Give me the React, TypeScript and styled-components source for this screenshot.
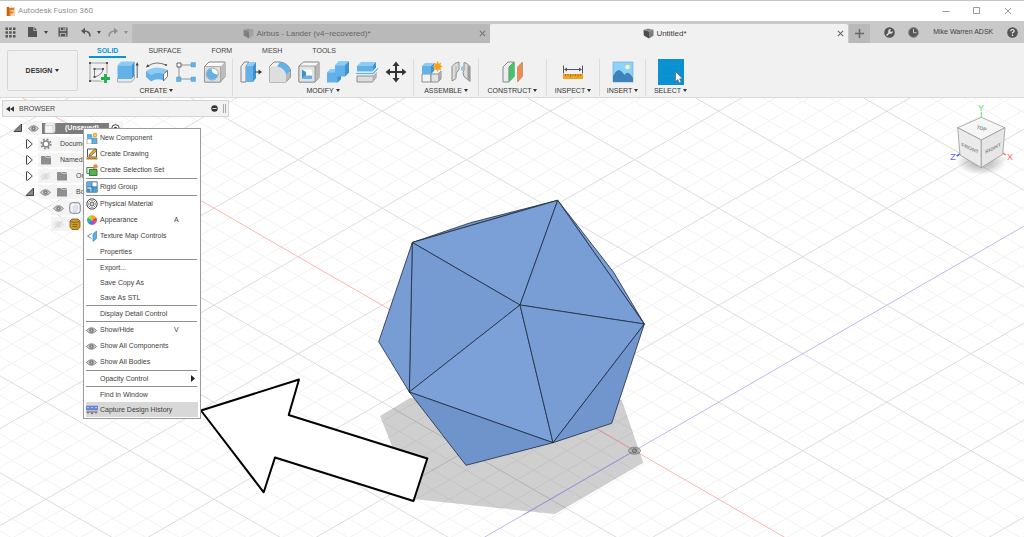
import React from 'react';
import styled, { createGlobalStyle } from 'styled-components';

const GlobalStyle = createGlobalStyle`
  * { box-sizing: border-box; }
  body {
    margin: 0;
    background: #fff;
    color: #444;
    font-family: "Liberation Sans", Arial, sans-serif;
    font-size: 7px;
    line-height: 10px;
  }
  button {
    margin: 0;
    padding: 0;
    border: 0;
    background: none;
    color: inherit;
    font: inherit;
    cursor: default;
  }
  ul { margin: 0; padding: 0; list-style: none; }
  svg { display: block; flex: none; }
`;

const Window = styled.div`
  display: flex;
  flex-direction: column;
  min-height: 100vh;
`;

/* ---------- title bar ---------- */

const TitleBar = styled.header`
  display: flex;
  align-items: center;
  gap: 3px;
  height: 21px;
  padding: 0 2px 0 6px;
  border-top: 1px solid #c4c4c4;
`;

const AppTitle = styled.h1`
  flex: 1;
  margin: 0;
  color: #909090;
  font: 400 8px/12px Roboto, "Liberation Sans", sans-serif;
`;

const WindowButton = styled.button`
  display: flex;
  align-items: center;
  justify-content: center;
  width: 28px;
  height: 20px;
`;

/* ---------- document tab strip ---------- */

const Strip = styled.div`
  display: flex;
  align-items: stretch;
  height: 22px;
  padding-top: 3px;
  background: #c9c9c9;
`;

const QuickTools = styled.div`
  display: flex;
  align-items: center;
  width: 132px;
  padding: 0 0 3px 5px;
`;

const QuickButton = styled.button<{ $w: number }>`
  display: flex;
  align-items: center;
  width: ${p => p.$w}px;
  height: 16px;
  gap: 6px;
`;

const DocTab = styled.div<{ $active?: boolean }>`
  display: flex;
  flex: 1;
  align-items: center;
  padding-right: 3px;
  border-radius: 2px 2px 0 0;
  background: ${p => (p.$active ? '#f1f1f1' : '#b9b9b9')};
  color: ${p => (p.$active ? '#3c3c3c' : '#666')};
`;

const DocName = styled.button`
  display: flex;
  flex: 1;
  align-items: center;
  justify-content: center;
  gap: 2px;
  padding-left: 5px;
  font-size: 8px;
  line-height: 12px;
`;

const CloseButton = styled.button`
  display: flex;
  align-items: center;
  justify-content: center;
  width: 10px;
  height: 12px;
`;

const AccountArea = styled.div`
  display: flex;
  align-items: center;
  justify-content: space-between;
  width: 176px;
  padding-right: 6px;
`;

const AddTab = styled.button`
  display: flex;
  align-items: center;
  justify-content: center;
  align-self: stretch;
  width: 21px;
  margin-left: 1px;
  background: #b9b9b9;
`;

const AccountButton = styled.button`
  padding-bottom: 3px;
`;

/* ---------- ribbon ---------- */

const Ribbon = styled.div`
  display: flex;
  height: 55px;
  background: #f1f1f1;
  border-bottom: 1px solid #dadada;
`;

const WorkspaceButton = styled.button`
  display: flex;
  align-items: center;
  justify-content: center;
  gap: 3px;
  width: 71px;
  height: 41px;
  margin: 7px 3px 0 7px;
  border: 1px solid #d6d6d6;
  border-radius: 2px;
  color: #333;
  font-weight: 700;
`;

const RibbonMain = styled.div`
  display: flex;
  flex: 1;
  flex-direction: column;
`;

const RibbonTabs = styled.nav`
  display: flex;
  gap: 14px;
  height: 15px;
  padding-left: 8px;
`;

const RibbonTab = styled.button<{ $active?: boolean }>`
  padding: 2px 8px 0;
  border-bottom: 2px solid ${p => (p.$active ? '#0696d7' : 'transparent')};
  color: ${p => (p.$active ? '#0696d7' : '#444')};
  font-weight: ${p => (p.$active ? 700 : 400)};
`;

const Groups = styled.div`
  display: flex;
  padding-top: 1px;
`;

const Group = styled.section<{ $min?: number; $last?: boolean }>`
  display: flex;
  flex-direction: column;
  align-items: center;
  min-width: ${p => p.$min ?? 0}px;
  height: 37px;
  padding: 0 3px;
  border-right: 1px solid ${p => (p.$last ? 'transparent' : '#dcdcdc')};
`;

const GroupTools = styled.div`
  display: flex;
`;

const ToolButton = styled.button<{ $on?: boolean }>`
  display: flex;
  align-items: center;
  justify-content: center;
  width: ${p => (p.$on ? 26 : 29)}px;
  height: 26px;
  background: ${p => (p.$on ? '#0a90d5' : 'none')};
`;

const GroupLabel = styled.button`
  display: flex;
  align-items: center;
  gap: 2px;
  height: 12px;
  color: #333;
  white-space: nowrap;
`;

const Caret = styled.span`
  border: 2px solid transparent;
  border-top: 3px solid currentColor;
  border-bottom: 0;
`;

/* ---------- viewport, browser tree and context menu ---------- */

const Viewport = styled.main`
  position: relative;
  flex: 1;
  min-height: 320px;
  overflow: hidden;
`;

const Scene = styled.svg`
  position: absolute;
  inset: 0;
  width: 100%;
  height: 100%;
`;

const ViewCube = styled.svg`
  position: absolute;
  top: 0;
  right: 0;
`;

const Browser = styled.aside`
  position: relative;
  width: 229px;
  padding: 2px 0 0 2px;
`;

const BrowserHeader = styled.div`
  display: flex;
  align-items: center;
  gap: 5px;
  height: 17px;
  padding: 0 1px 0 3px;
  border: 1px solid #d4d4d4;
  background: #f2f2f2;
  color: #444;
`;

const BrowserTitle = styled.h2`
  flex: 1;
  margin: 0;
  font: inherit;
`;

const PanelOptions = styled.button`
  display: flex;
  align-items: center;
`;

const Tree = styled.ul`
  padding-top: 3px;
`;

const TreeRow = styled.li<{ $indent: number }>`
  display: flex;
  align-items: center;
  height: 16px;
  padding-left: ${p => p.$indent}px;
`;

const Twisty = styled.span`
  width: 13px;
`;

const TreeCell = styled.span<{ $text?: boolean }>`
  display: flex;
  align-items: center;
  gap: 5px;
  height: 14px;
  padding: 0 3px 0 ${p => (p.$text ? 5 : 2)}px;
  background: #f1f1f1cc;
  white-space: nowrap;
`;

const RootCell = styled.span`
  display: flex;
  align-items: center;
  gap: 9px;
  width: 67px;
  height: 11px;
  padding: 0 2px;
  background: #7c7c7c;
  color: #fff;
  font-weight: 700;
`;

const Menu = styled.ul`
  position: absolute;
  top: 30px;
  left: 83px;
  width: 118px;
  padding: 1px 2px;
  border: 1px solid #9b9b9b;
  background: #fff;
`;

const MenuItem = styled.button<{ $tall?: boolean; $on?: boolean }>`
  display: grid;
  grid-template-columns: 12px 1fr 24px;
  align-items: center;
  column-gap: 2px;
  width: 100%;
  height: ${p => (p.$tall ? 16 : 15)}px;
  background: ${p => (p.$on ? '#d8d8d8' : 'none')};
  color: #404040;
  text-align: left;
  white-space: nowrap;
`;

const MenuRule = styled.li`
  height: 1px;
  margin-right: 1px;
  background: #8f8f8f;
`;

/* ---------- icons ---------- */

const BLUE = '#62b2e9';
const DBLUE = '#3f92d0';
const LBLUE = '#8accf4';
const EDGE = '#858585';

const Ico = ({ s = 24, v = 24, children }: { s?: number; v?: number; children: React.ReactNode }) => (
  <svg width={s} height={s} viewBox={`0 0 ${v} ${v}`} fill="none" aria-hidden="true">{children}</svg>
);

const CubeGlyph = ({ dim }: { dim?: boolean }) => (
  <Ico s={11} v={11}>
    <path d="M0.5 2 5 .5l5.500 1.200-4.500 1.800z" fill={dim ? '#9a9a9a' : '#8d8d8d'} />
    <path d="M.5 2 6 3.500v7L.8 7.500z" fill={dim ? '#7d7d7d' : '#4c4c4c'} />
    <path d="M6 3.500 10.500 1.700v6L6 10.500z" fill={dim ? '#a2a2a2' : '#7c7c7c'} />
  </Ico>
);

const Cross = ({ s = 7, c = '#666', w = 1.2 }: { s?: number; c?: string; w?: number }) => (
  <Ico s={s} v={8}><path d="M1 1l6 6M7 1 1 7" stroke={c} strokeWidth={w} /></Ico>
);

const Eye = ({ faint }: { faint?: boolean }) => (
  <svg width="11" height="9" viewBox="0 0 11 9" fill="none" opacity={faint ? 0.2 : 1} aria-hidden="true">
    <path d="M.5 4.500Q5.500-1.200 10.500 4.500 5.500 10.200.5 4.500z" fill="#cfcfcf" stroke="#8a8a8a" strokeWidth="1" />
    <circle cx="5.500" cy="4.500" r="2.200" fill="#7d7d7d" />
    <circle cx="5.500" cy="4.500" r=".8" fill="#c9c9c9" />
    {faint && <path d="M1 8.500 10 .5" stroke="#666" />}
  </svg>
);

const Folder = () => (
  <Ico s={12} v={12}><path d="M1 2h4l1 1.500h5V10.500H1z" fill="#8f8f8f" /><path d="M6 2.500h4.500" stroke="#8f8f8f" /></Ico>
);

const Open = () => (
  <Ico s={10} v={10}><path d="M8.500 1v7.500H1z" fill="#888" stroke="#333" strokeWidth=".9" /></Ico>
);
const Closed = () => (
  <Ico s={10} v={10}><path d="M1.500.8v8.400h1.300L7.300 5 2.800.8z" fill="#fff" stroke="#444" strokeWidth="1" /></Ico>
);

const tools: Record<string, React.ReactNode> = {
  sketch: (
    <>
      <path d="M3 3h17v18H3z" stroke="#8a8a8a" strokeWidth=".8" />
      <path d="M2 2h2v2H2zM19 2h2v2h-2zM2 20h2v2H2z" fill="#555" />
      <path d="M7.500 17V9H16q-.5 6-8.500 8z" stroke="#777" strokeWidth=".9" />
      <path d="M6.500 8h2v2h-2zM15 8h2v2h-2zM6.500 16h2v2h-2z" fill="#555" />
      <path d="M18.500 13.500v10M13.500 18.500h10" stroke="#f1f1f1" strokeWidth="5" />
      <path d="M18.500 14v9M14 18.500h9" stroke="#1fae4b" strokeWidth="2.800" />
    </>
  ),
  extrude: (
    <>
      <path d="M1.500 18.500h14l3-3.500v3.500L15.500 22h-14z" fill="#e9e9e9" stroke="#999" strokeWidth=".8" />
      <path d="M1.500 5.500 5 1.500h13.500l-3 4z" fill={LBLUE} />
      <path d="M1.500 5.500h14V19h-14z" fill={BLUE} /><path d="m15.500 5.500 3-4V15l-3 4z" fill={DBLUE} />
      <path d="M21.200 18V4" stroke="#555" strokeWidth=".9" /><path d="m19.700 5.500 1.500-3.500 1.500 3.500z" fill="#444" />
    </>
  ),
  revolve: (
    <>
      <path d="M3 6Q11 .5 21 5" stroke="#666" strokeWidth=".9" /><path d="m1 7.500 1.500-3.300 2 2.300z" fill="#444" /><circle cx="21" cy="5" r="1" fill="#444" />
      <path d="M1 11q10-6.500 22-1l-4.500 4q-7-3.500-12.500 1z" fill={LBLUE} /><path d="m1 11 5 4q6-4.500 12.500-1v6.500q-6.500-3-12.500 1L1 17z" fill={BLUE} />
      <path d="m18.500 14 4-3.500v6l-4 4.500z" fill="#f7f7f7" stroke="#666" strokeWidth=".9" />
    </>
  ),
  pattern: (
    <>
      <path d="M5 5h14M5 5v14h14" stroke="#8a8a8a" strokeWidth=".9" />
      <path d="M3 3h4v4H3z" fill="#fff" stroke="#555" strokeWidth=".9" />
      <path d="M17 2.500h4.500V7H17zM2.500 17H7v4.500H2.500zM17 17h4.500v4.500H17z" fill={BLUE} stroke={DBLUE} strokeWidth=".4" />
    </>
  ),
  hole: (
    <>
      <path d="M1.500 6.500 6 2h16v14.500L17.500 22h-16z" fill="#fafafa" stroke={EDGE} strokeWidth="1" />
      <path d="M17.500 6.500 22 2v14.500L17.500 22z" fill="#bcbcbc" /><path d="M1.500 6.500h16V22h-16z" fill="#dedede" stroke={EDGE} strokeWidth=".6" />
      <circle cx="9.200" cy="14" r="6" fill="#fff" stroke="#8a8a8a" strokeWidth=".7" /><path d="M8.500 8.500q0 5.500 6.200 6A5.600 5.600 0 1 1 8.500 8.500z" fill={BLUE} />
    </>
  ),
  press: (
    <>
      <path d="M2 6.500 5.500 2H10L7 6v16H2z" fill="#eee" stroke={EDGE} strokeWidth="1" />
      <path d="m7 6 4-4h6l-3 4z" fill={LBLUE} /><path d="M7 6h7v16H7z" fill={BLUE} /><path d="m14 6 3-4v16l-3 4z" fill={DBLUE} />
      <path d="M16 12h5" stroke="#444" strokeWidth="1.100" /><path d="m19.500 9.500 3.500 2.500-3.500 2.500z" fill="#333" />
    </>
  ),
  fillet: (
    <>
      <path d="M1.500 6.500 6 2h6q8 1 10.500 8v7.500L18 22H1.500z" fill="#f2f2f2" stroke={EDGE} strokeWidth="1" />
      <path d="M1.500 6.500H9Q17 8 18 15v7H1.500z" fill="#dedede" />
      <path d="M9 6.500 12 2q9 1 10.500 9.500L18 15Q17 8 9 6.500z" fill={BLUE} />
      <path d="M18 15v7l4.500-4.500V11.500z" fill="#b7b7b7" />
    </>
  ),
  shell: (
    <>
      <path d="M2 6 6.500 2H22v15.500L18 22H2z" fill="#f7f7f7" stroke={EDGE} strokeWidth="1" />
      <path d="m18 6 4-4v15.500L18 22z" fill="#b7b7b7" /><path d="M2 6h16v16H2z" fill="#e2e2e2" stroke={EDGE} strokeWidth=".7" />
      <path d="M5 9.500h10v9.500H5z" fill="#fff" /><path d="M5 9.500 9 12v3.500L5 19z" fill={DBLUE} /><path d="M9 15.500h6V19H5z" fill={BLUE} />
    </>
  ),
  combine: (
    <>
      <path d="M9 5.500 12.500 1.500H23v11l-4 4h-4V19l-3.500 3.500H1V12.500L4.500 9H9z" fill={BLUE} />
      <path d="M9 5.500 12.500 1.500H23l-4 4zM1 12.500 4.500 9H9v3.500z" fill={LBLUE} /><path d="m19 5.500 4-4v11l-4 4zM11.500 16.500H15V19l-3.500 3.500z" fill={DBLUE} />
    </>
  ),
  split: (
    <>
      <path d="M2 6 6 2h15l-3.500 4z" fill={LBLUE} /><path d="M2 6h15.500v5.500H2z" fill={BLUE} /><path d="m17.500 6 3.500-4v5.500l-3.500 4z" fill={DBLUE} />
      <path d="M2 16h15.500l3.500-4v5.500L17.500 22H2z" fill="#dcdcdc" stroke={EDGE} strokeWidth=".9" /><path d="M17.500 16v6l3.500-4.500V12z" fill="#b5b5b5" />
      <path d="M1 13.500h17l5-5" stroke="#fff" strokeWidth="3" /><path d="M1 13.500h17l5-5" stroke={BLUE} strokeWidth="1.300" />
    </>
  ),
  move: (
    <path d="m12 1.500 3.500 4.500H13v5h5V8.500l4.500 3.500-4.500 3.500V13h-5v5h2.500L12 22.500 8.500 18H11v-5H6v2.500L1.500 12 6 8.500V11h5V6H8.500z" fill="#333" />
  ),
  component: (
    <>
      <path d="M2 14h9v8H2z" fill="#f3f3f3" stroke={EDGE} strokeWidth=".9" /><path d="M11 14h7l3-3v8l-3 3h-7z" fill="#e4e4e4" stroke={EDGE} strokeWidth=".9" /><path d="M18 14v8l3-3v-8z" fill="#aaa" />
      <path d="m2 6 3-3h8l-2 3z" fill={LBLUE} /><path d="M2 6h9v8H2z" fill={BLUE} /><path d="m11 6 3-3v8l-3 3z" fill={DBLUE} />
      <path d="m17.500 1 1.200 2.700 2.800-1.200-1.200 2.800 2.700 1.200-2.700 1.200 1.200 2.800-2.800-1.200-1.200 2.700-1.200-2.700-2.800 1.200 1.200-2.800L12 6.500l2.700-1.200-1.200-2.800 2.800 1.200z" fill="#f5a21b" />
    </>
  ),
  joint: (
    <>
      <path d="M3 6.500q2.500-4 7-4.500v8q-3 1.500-3 5.500v3L3 21z" fill="#dcdcdc" stroke={EDGE} strokeWidth=".9" /><path d="M7 6v11" stroke="#aaa" />
      <path d="M21 6.500q-3-4-6-4v7.500q-2 2 0 6.500l6 5z" fill="#dcdcdc" stroke={EDGE} strokeWidth=".9" /><path d="M18.500 5v14l2.500 2V6.500z" fill="#9c9c9c" /><ellipse cx="13.500" cy="8.500" rx="1.500" ry="2.500" fill="#8fc4ea" />
    </>
  ),
  plane: (
    <>
      <path d="m2 7 5-5h6L8 7v15H2z" fill="#ececec" stroke="#888" strokeWidth="1" /><path d="m8 7 5.500-5v14.500L8 22z" fill="#45c26d" stroke="#5f9c73" strokeWidth=".5" />
      <path d="m16.500 7 5-5v14.500l-5 5.500z" fill="#e98b52" stroke="#b87a57" strokeWidth=".6" />
    </>
  ),
  measure: (
    <>
      <path d="M2.500 5.500v8M21.500 5.500v8M4 9.500h16" stroke="#555" strokeWidth="1" /><path d="m3 9.500 3-2v4zM21 9.500l-3-2v4z" fill="#555" />
      <path d="M2 14h20v5H2z" fill="#f0a423" /><path d="M4.500 14v2M7 14v2M9.500 14v3M12 14v2M14.500 14v2M17 14v3M19.500 14v2" stroke="#9a6714" strokeWidth=".8" />
    </>
  ),
  image: (
    <>
      <path d="M2 2h20v20H2z" fill="#8ed1fa" stroke="#6ba8d0" strokeWidth=".6" /><circle cx="16.500" cy="7" r="2.300" fill="#fff7b5" />
      <path d="M2 16q3-6 6-6 2.500.5 5.500 5 2-3 4-2 2.500 1 4.500 5v4H2z" fill="#3e83bb" />
    </>
  ),
  select: (
    <>
      <path d="M2 4h18v12H2z" stroke="#1fa3a0" strokeDasharray="2 1.500" strokeWidth=".8" />
      <path d="M16.500 11.500v10l2.300-2 1.500 3.500 1.900-.8-1.600-3.400h3z" fill="#fff" stroke="#555" strokeWidth=".6" />
    </>
  ),
};

const menuIcons: Record<string, React.ReactNode> = {
  component: (
    <>
      <path d="M1 7h5v5H1z" fill="#fff" stroke="#999" strokeWidth=".7" /><path d="M6 6h5v6H6z" fill="#5cb0e8" stroke="#6b7f90" strokeWidth=".6" /><path d="M1 2h5v5H1z" fill="#5cb0e8" /><path d="M6 4h3v2H6z" fill="#bde0f6" />
      <circle cx="9" cy="3" r="2.300" fill="#f5a21b" /><circle cx="9" cy="3" r=".9" fill="#ffe08a" />
    </>
  ),
  drawing: (
    <>
      <path d="M1.500 1h9v8h-9z" fill="#fff" stroke="#555" strokeWidth="1" /><path d="M.5 10.500h11" stroke="#b97d16" strokeWidth="2" />
      <path d="m3 8 .6-2L8.800 1 11 2.500 5.200 7.700z" fill="#f0a423" stroke="#5a4418" strokeWidth=".6" />
    </>
  ),
  set: (
    <>
      <path d="M.8 3.500h7v6h-7z" fill="#d6efd2" stroke="#3d7a3c" strokeWidth=".9" /><path d="M3.500 5.500h7.500v6H3.500z" fill="#58b155" stroke="#346f34" strokeWidth=".9" /><circle cx="9.500" cy="2.500" r="2.200" fill="#ef8440" />
    </>
  ),
  rigid: (
    <>
      <path d="M.8.8h10.400v10.400H.8z" fill="#fff" stroke="#54728c" strokeWidth="1" /><path d="M1 1h5v5H1z" fill="#5cb0e8" /><path d="M1 7.500h3.500V11H1z" fill="#3b8fcb" /><path d="M5.500 5.500h5.500v5.500H5.500z" fill="#4ba0dc" /><path d="M6 1v10M1 6h10" stroke="#36617f" strokeWidth=".7" />
    </>
  ),
  material: (
    <>
      <circle cx="6" cy="6" r="5.200" fill="#fff" stroke="#4d4d4d" /><path d="M2.300 2.300 9.700 9.700M9.700 2.300 2.300 9.700M4 1.200 6 3.500 8 1.200M4 10.800 6 8.500l2 2.300M1.200 4 3.500 6 1.200 8M10.800 4 8.500 6l2.300 2" stroke="#555" strokeWidth=".8" /><circle cx="6" cy="6" r="1.500" fill="#fff" stroke="#555" strokeWidth=".8" />
    </>
  ),
  appearance: (
    <>
      <path d="M6 6V1a5 5 0 0 1 4.300 2.500z" fill="#f9a51a" /><path d="M6 6l4.300-2.500a5 5 0 0 1 0 5z" fill="#ee3e3a" /><path d="m6 6 4.300 2.500A5 5 0 0 1 6 11z" fill="#b34ac4" />
      <path d="M6 6v5a5 5 0 0 1-4.300-2.500z" fill="#3b7de0" /><path d="M6 6 1.700 8.500a5 5 0 0 1 0-5z" fill="#31b56a" /><path d="M6 6 1.700 3.500A5 5 0 0 1 6 1z" fill="#b5d334" />
    </>
  ),
  texture: (
    <>
      <path d="m7 4 3.500-3v7.500L7 11.500z" fill="#5cb0e8" stroke="#3578a8" strokeWidth=".6" /><path d="M5.500 3.500 1.500 6l4 2.500" stroke="#6a8ba5" strokeWidth="1" />
    </>
  ),
  history: (
    <>
      <path d="M.5 2h3v4h-3zM4.500 2h3v4h-3zM8.500 2h3v4h-3z" fill="#6d8ee0" stroke="#466bc8" strokeWidth=".6" /><path d="M1.500 3.500h1M5.500 3.500h1M9.500 3.500h1" stroke="#fff" /><path d="M.5 8h11M2 8v1.500M10 8v1.500M5 9.500h2" stroke="#555" strokeWidth=".9" />
    </>
  ),
};

/* ---------- data ---------- */

const ribbonGroups: { label: string; icons: string[]; min?: number }[] = [
  { label: 'CREATE', icons: ['sketch', 'extrude', 'revolve', 'pattern', 'hole'] },
  { label: 'MODIFY', icons: ['press', 'fillet', 'shell', 'combine', 'split', 'move'] },
  { label: 'ASSEMBLE', icons: ['component', 'joint'] },
  { label: 'CONSTRUCT', icons: ['plane'], min: 68 },
  { label: 'INSPECT', icons: ['measure'], min: 53 },
  { label: 'INSERT', icons: ['image'], min: 46 },
  { label: 'SELECT', icons: ['select'], min: 50 },
];

type Entry = { text: string; icon?: string; key?: string; on?: boolean; sub?: boolean } | null;

const menuEntries: Entry[] = [
  { text: 'New Component', icon: 'component' },
  { text: 'Create Drawing', icon: 'drawing' },
  { text: 'Create Selection Set', icon: 'set' },
  null,
  { text: 'Rigid Group', icon: 'rigid' },
  null,
  { text: 'Physical Material', icon: 'material' },
  { text: 'Appearance', icon: 'appearance', key: 'A' },
  { text: 'Texture Map Controls', icon: 'texture' },
  { text: 'Properties' },
  null,
  { text: 'Export...' },
  { text: 'Save Copy As' },
  { text: 'Save As STL' },
  null,
  { text: 'Display Detail Control' },
  null,
  { text: 'Show/Hide', icon: 'eye', key: 'V' },
  { text: 'Show All Components', icon: 'eye' },
  { text: 'Show All Bodies', icon: 'eye' },
  null,
  { text: 'Opacity Control', sub: true },
  null,
  { text: 'Find in Window' },
  { text: 'Capture Design History', icon: 'history', on: true },
];

/* The ground grid: two families of parallel lines through the origin, every fifth one heavier. */
const ORIGIN = { x: 634.5, y: 450.7 };
const SLOPE = 48.5 / 84.1;
const STEP = 97 / 5;
const REACH = 2400;

const rank = (i: number) => (i === 0 ? 2 : i % 5 === 0 ? 1 : 0);
const gridIndices = Array.from({ length: 181 }, (_, n) => n - 90).sort((a, b) => rank(a) - rank(b));

const gridColor = (i: number, dir: number) => {
  if (i === 0) return dir === 1 ? '#ffb3b3' : '#b9b9f5';
  return i % 5 === 0 ? '#dcdcdc' : '#f2f2f2';
};

const GridLines = () => (
  <>
    {gridIndices.flatMap(i =>
      [1, -1].map(dir => (
        <line
          key={`${i}:${dir}`}
          x1={ORIGIN.x - REACH}
          y1={ORIGIN.y + i * STEP - dir * REACH * SLOPE}
          x2={ORIGIN.x + REACH}
          y2={ORIGIN.y + i * STEP + dir * REACH * SLOPE}
          stroke={gridColor(i, dir)}
        />
      )),
    )}
  </>
);

const faces: [string, string][] = [
  ['412.300,242.500 470.500,222.700 557.700,200.300', '#7196cf'],
  ['557.700,200.300 613.300,271.800 644.300,324', '#7ba0d7'],
  ['412.300,242.500 557.700,200.300 520,305', '#7ba0d7'],
  ['557.700,200.300 644.300,324 520,305', '#799ed5'],
  ['412.300,242.500 520,305 409.300,392', '#769bd2'],
  ['520,305 553,442.700 409.300,392', '#7ca1d8'],
  ['520,305 644.300,324 553,442.700', '#789dd4'],
  ['412.300,242.500 409.300,392 378.700,341.700', '#779dd4'],
  ['409.300,392 553,442.700 466,465.300', '#6f94cb'],
  ['644.300,324 611.700,423.300 553,442.700', '#7196cd'],
];

export default function App() {
  return (
    <Window>
      <GlobalStyle />
      <TitleBar>
        <Ico s={9} v={9}>
          <path d="M0 0h9v9H0z" fill="#f9d3b0" /><path d="M1 0h2v9H1z" fill="#c85f12" /><path d="M3 1h5v2H4.500v1.500h3v1.800h-3V9H3z" fill="#e67817" />
        </Ico>
        <AppTitle>Autodesk Fusion 360</AppTitle>
        <WindowButton aria-label="Minimize"><Ico s={8} v={8}><path d="M.5 4.500h7" stroke="#999" /></Ico></WindowButton>
        <WindowButton aria-label="Maximize"><Ico s={8} v={8}><path d="M.5.5h6v6h-6z" stroke="#999" /></Ico></WindowButton>
        <WindowButton aria-label="Close"><Cross s={8} c="#888" w={0.9} /></WindowButton>
      </TitleBar>

      <Strip>
        <QuickTools>
          <QuickButton $w={23} aria-label="Data panel">
            <Ico s={11} v={11}><path d="M.5.5h2.500v2.500H.5zM4.200.5h2.500v2.500H4.200zM8 .5h2.500v2.500H8zM.5 4.200h2.500v2.500H.5zM4.200 4.200h2.500v2.500H4.200zM8 4.200h2.500v2.500H8zM.5 8h2.500v2.500H.5zM4.200 8h2.500v2.500H4.200zM8 8h2.500v2.500H8z" fill="#555" /></Ico>
          </QuickButton>
          <QuickButton $w={30} aria-label="File">
            <Ico s={10} v={10}><path d="M0 0h5.500v4H9v6H0z" fill="#555" /><path d="M6.300 0 9 3.200H6.300z" fill="#555" /></Ico>
            <Caret />
          </QuickButton>
          <QuickButton $w={23} aria-label="Save">
            <Ico s={10} v={11}><path d="M.5.5h10v10H.5z" fill="#555" /><path d="M2.500.5v3.500h6V.5M2.500 10.500V7h6v3.500" stroke="#c9c9c9" /><path d="M6.500 1v2" stroke="#c9c9c9" strokeWidth="1.200" /></Ico>
          </QuickButton>
          <QuickButton $w={27} aria-label="Undo">
            <Ico s={10} v={10}><path d="M9 9.500Q9 4 3 4" stroke="#555" strokeWidth="1.500" /><path d="M0 4 4 .8v6.400z" fill="#555" /></Ico>
            <Caret />
          </QuickButton>
          <QuickButton $w={22} aria-label="Redo" disabled style={{ color: '#8f8f8f' }}>
            <Ico s={10} v={10}><path d="M1 9.500Q1 4 7 4" stroke="#8f8f8f" strokeWidth="1.500" /><path d="M10 4 6 .8v6.400z" fill="#8f8f8f" /></Ico>
            <Caret />
          </QuickButton>
        </QuickTools>
        <DocTab>
          <DocName><CubeGlyph dim />Airbus - Lander (v4~recovered)*</DocName>
          <CloseButton aria-label="Close Airbus - Lander"><Cross c="#777" /></CloseButton>
        </DocTab>
        <DocTab $active>
          <DocName><CubeGlyph />Untitled*</DocName>
          <CloseButton aria-label="Close Untitled"><Cross /></CloseButton>
        </DocTab>
        <AccountArea>
          <AddTab aria-label="New design"><Ico s={9} v={9}><path d="M4.500 0v9M0 4.500h9" stroke="#666" strokeWidth="1.500" /></Ico></AddTab>
          <AccountButton aria-label="Extensions">
            <Ico s={11} v={11}><circle cx="5.500" cy="5.500" r="5.300" fill="#555" /><path d="m2.500 8.500 3.500-3.500" stroke="#ddd" strokeWidth="1.500" /><path d="M8.700 4A2.300 2.300 0 1 1 7 2.200L6 4l1.200.9z" fill="#ddd" /></Ico>
          </AccountButton>
          <AccountButton aria-label="Job status">
            <Ico s={11} v={11}><circle cx="5.500" cy="5.500" r="4.900" fill="#555" stroke="#8b8b8b" strokeWidth="1" /><path d="M5.500 2.200v3.500h3" stroke="#ccc" strokeWidth="1" /></Ico>
          </AccountButton>
          <AccountButton>Mike Warren ADSK</AccountButton>
          <AccountButton aria-label="Help">
            <Ico s={11} v={11}><circle cx="5.500" cy="5.500" r="5.300" fill="#555" /><path d="M3.800 4.200q0-1.700 1.700-1.700t1.700 1.500q0 1-1.700 1.700v.9M5.500 7.600V9" stroke="#eee" strokeWidth="1.200" /></Ico>
          </AccountButton>
        </AccountArea>
      </Strip>

      <Ribbon>
        <WorkspaceButton>DESIGN <Caret /></WorkspaceButton>
        <RibbonMain>
          <RibbonTabs>
            {['SOLID', 'SURFACE', 'FORM', 'MESH', 'TOOLS'].map((t, i) => (
              <RibbonTab key={t} $active={i === 0}>{t}</RibbonTab>
            ))}
          </RibbonTabs>
          <Groups>
            {ribbonGroups.map(g => (
              <Group key={g.label} $min={g.min} $last={g.label === 'SELECT'}>
                <GroupTools>
                  {g.icons.map(n => (
                    <ToolButton key={n} $on={n === 'select'} aria-label={n}><Ico>{tools[n]}</Ico></ToolButton>
                  ))}
                </GroupTools>
                <GroupLabel>{g.label} <Caret /></GroupLabel>
              </Group>
            ))}
          </Groups>
        </RibbonMain>
      </Ribbon>

      <Viewport>
        <Scene aria-label="Model view">
          <g transform="translate(0 -98)">
            <GridLines />
            <path d="M380 416 410 398 466 400 600 400 621.700 400 643.300 462.700 555 514 547 513.300 413 499z" fill="#000" fillOpacity=".19" />
            <path d="M594 427.300 634.500 450.700" stroke="#e0a0a0" />
            <path d="M523 515 634.500 450.700" stroke="#9c9cdc" />
            <ellipse cx="634.500" cy="450.700" rx="6" ry="3.500" fill="#8886" stroke="#777" strokeWidth=".8" />
            <circle cx="634.500" cy="450.700" r="2" stroke="#555" strokeWidth=".8" fill="#999" />
            {faces.map(([pts, fill]) => (
              <polygon key={pts} points={pts} fill={fill} stroke="#1d2a3d" strokeWidth=".8" strokeLinejoin="round" />
            ))}
            <path d="M201 410.500 299 379.500 288.700 415 427.300 458.500 413.500 501 275 457.500 263.700 492.300z" fill="#fff" stroke="#000" strokeWidth="2" strokeLinejoin="round" />
          </g>
        </Scene>

        <ViewCube width="94" height="88" viewBox="930 98 94 88" aria-label="View cube">
          <defs>
            <radialGradient id="ground"><stop offset="0" stopColor="#777" stopOpacity=".7" /><stop offset="1" stopColor="#777" stopOpacity="0" /></radialGradient>
          </defs>
          <ellipse cx="981.300" cy="162" rx="25" ry="13" fill="url(#ground)" />
          <path d="M981.300 117V112" stroke="#5fe35f" /><path d="m960 154-3.500 2" stroke="#6666e8" strokeWidth="1.500" /><path d="m1003 153 3 2" stroke="#ff6d6d" strokeWidth="1.500" />
          <path d="m981.300 117.300 23.700 10.400-23.700 12.300-23.600-12.300z" fill="#f6f6f6" stroke="#999" strokeWidth=".8" />
          <path d="m957.700 127.700 23.600 12.300v27.700L960 155z" fill="#ebebeb" stroke="#999" strokeWidth=".8" />
          <path d="m1005 127.700-23.700 12.300v27.700l21.400-13.400z" fill="#e6e6e6" stroke="#999" strokeWidth=".8" />
          <g fill="#8b8b8b" fontSize="5" fontWeight="700" textAnchor="middle">
            <text transform="translate(981 130) rotate(18)">TOP</text>
            <text transform="translate(970 150) skewY(25)">FRONT</text>
            <text transform="translate(993 150) skewY(-28)">RIGHT</text>
          </g>
          <g fontSize="9" textAnchor="middle">
            <text x="981" y="111" fill="#5fe35f">Y</text>
            <text x="953" y="160" fill="#6666e8">Z</text>
            <text x="1010" y="160" fill="#ff6d6d">X</text>
          </g>
        </ViewCube>

        <Browser>
          <BrowserHeader>
            <PanelOptions aria-label="Collapse browser"><Ico s={8} v={7}><path d="M3.500 1v5L0 3.500zM7 1v5L3.500 3.500z" fill="#333" /></Ico></PanelOptions>
            <BrowserTitle>BROWSER</BrowserTitle>
            <PanelOptions aria-label="Browser options"><Ico s={7} v={7}><circle cx="3.500" cy="3.500" r="3.200" fill="#333" /><path d="M1.500 3.500h4" stroke="#ddd" /></Ico></PanelOptions>
            <svg width="4" height="9" viewBox="0 0 4 9" aria-hidden="true"><path d="M.5 0v9M2.500 0v9" stroke="#aaa" /></svg>
          </BrowserHeader>
          <Tree>
            <TreeRow $indent={11}>
              <Twisty><Open /></Twisty>
              <TreeCell><Eye /></TreeCell>
              <RootCell>
                <Ico s={12} v={12}><path d="M1 3q0-2 2-2h8v8q0 2-2 2H1z" fill="#f4f4f4" stroke="#ccc" strokeWidth=".6" /><path d="M9 3.500v7M1 3.500h8l2-2" stroke="#bbb" strokeWidth=".6" /></Ico>
                (Unsaved)
              </RootCell>
              <TreeCell><Ico s={9} v={9}><circle cx="4.500" cy="4.500" r="3.800" fill="#fff" stroke="#444" /><circle cx="4.500" cy="4.500" r="1.700" fill="#333" /></Ico></TreeCell>
            </TreeRow>
            <TreeRow $indent={23}>
              <Twisty><Closed /></Twisty>
              <TreeCell>
                <Ico s={12} v={12}><circle cx="6" cy="6" r="4.700" stroke="#888" strokeWidth="1.800" strokeDasharray="1.800 1.900" /><circle cx="6" cy="6" r="3" stroke="#888" strokeWidth="1.600" fill="#fff" /></Ico>
              </TreeCell>
              <TreeCell $text>Document Settings</TreeCell>
            </TreeRow>
            <TreeRow $indent={23}>
              <Twisty><Closed /></Twisty>
              <TreeCell><Folder /></TreeCell>
              <TreeCell $text>Named Views</TreeCell>
            </TreeRow>
            <TreeRow $indent={23}>
              <Twisty><Closed /></Twisty>
              <TreeCell><Eye faint /></TreeCell>
              <TreeCell><Folder /></TreeCell>
              <TreeCell $text>Origin</TreeCell>
            </TreeRow>
            <TreeRow $indent={23}>
              <Twisty><Open /></Twisty>
              <TreeCell><Eye /></TreeCell>
              <TreeCell><Folder /></TreeCell>
              <TreeCell $text>Bodies</TreeCell>
            </TreeRow>
            <TreeRow $indent={49}>
              <TreeCell>
                <Eye />
                <Ico s={12} v={12}><rect x=".8" y=".8" width="10.400" height="10.400" rx="2.500" fill="#fff" stroke="#6f7686" /><path d="M4 4.500 5.500 3H9v5L7.500 9.500H4z" fill="#dde5ef" stroke="#bcc6d2" strokeWidth=".5" /></Ico>
              </TreeCell>
            </TreeRow>
            <TreeRow $indent={49}>
              <TreeCell>
                <Eye faint />
                <Ico s={12} v={12}><path d="M1 3 3 1h6l2 2v6l-2 2.500H3L1 9z" fill="#c99a2e" stroke="#7b5b12" strokeWidth=".8" /><path d="M1.500 3.500q4.500 2 9 0M3.500 6.500h5M3.500 8.500h5" stroke="#7b5b12" strokeWidth=".8" /></Ico>
              </TreeCell>
            </TreeRow>
          </Tree>
        </Browser>

        <Menu>
          {menuEntries.map((e, i) =>
            e === null ? (
              <MenuRule key={i} role="separator" />
            ) : (
              <li key={i}>
                <MenuItem $tall={!!e.icon && !e.on} $on={e.on}>
                  <span>{e.icon === 'eye' ? <Eye /> : e.icon && <Ico s={12} v={12}>{menuIcons[e.icon]}</Ico>}</span>
                  <span>{e.text}</span>
                  <span>{e.key}{e.sub && <svg width="22" height="7" viewBox="0 0 22 7"><path d="M17 0v7l4-3.500z" fill="#222" /></svg>}</span>
                </MenuItem>
              </li>
            ),
          )}
        </Menu>
      </Viewport>
    </Window>
  );
}
